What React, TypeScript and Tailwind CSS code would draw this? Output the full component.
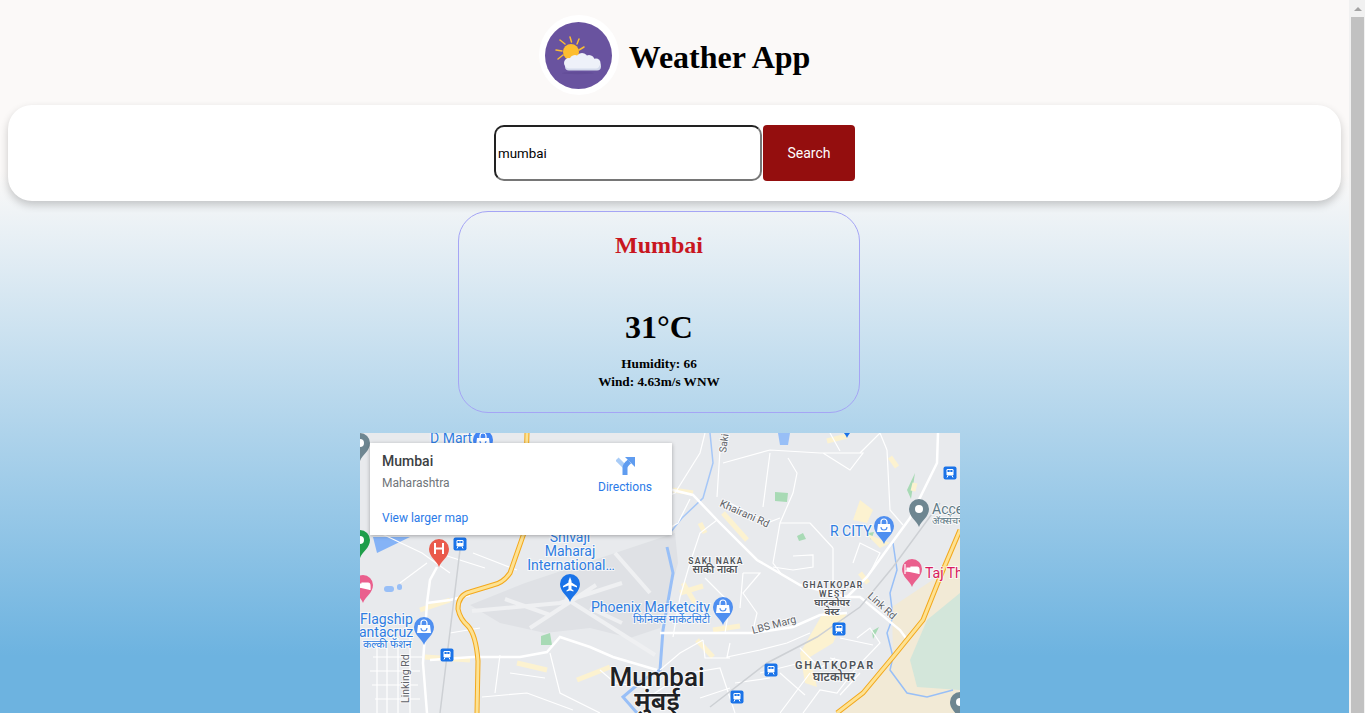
import React from "react";

/* map data, in map pixels */
const motorways = [
  "M167 0 L164 100 L150 140 Q143 150 133 152 L110 159 Q98 162 98 176 Q100 186 108 193 Q116 202 118 228 L117 280",
  "M600 97 L583 137 L563 187 L533 224 L503 260 L477 280",
];

const mainRoads = [
  "M300 54 L333 62 L357 87 L397 127 L440 152 L487 164 L507 144 L550 85 L577 30 L578 0",
  "M487 164 L500 164 L540 197 L548 208",
  "M300 200 L340 200 L393 200 L433 194 L460 182 L487 180",
  "M70 227 L113 224 L160 224 L187 219 L200 204 L230 214 L253 224 L297 237",
  "M67 280 L63 230 L67 170 L70 147 L77 134",
  "M67 170 L90 167 L110 162",
];

const minorRoads = [
  "M360 17 L357 64 M363 30 L410 17 L460 20 L503 20 L490 37 L463 20",
  "M410 20 L403 74 M370 70 L407 90 L420 85 M428 25 L437 40 L433 60 L420 90 L413 130 L423 143",
  "M527 17 L530 77 L543 92 M520 0 L527 17 M470 0 L480 18 M500 20 L520 0",
  "M357 87 L340 100 L330 130 L320 164 L313 204",
  "M433 123 L453 122 L453 134 L433 137 L413 134",
  "M473 115 L473 155 M493 130 L500 110 L520 120 L510 140 M450 90 L473 115 M420 90 L450 90",
  "M383 140 L400 140 L383 160 L397 180 L393 197 M383 140 L380 175 M345 145 L370 170 L365 200",
  "M370 210 L367 224 L400 217 L427 210 L450 200 M300 237 L320 220 L343 207 M343 207 L345 225 L370 225",
  "M443 280 L460 257 L477 260 L497 234 L520 210 L510 195 L497 205 M440 215 L460 235 L475 225",
  "M480 205 L513 212 M470 225 L500 232 M445 262 L420 240 M500 240 L480 262",
  "M400 240 L440 230 M420 280 L450 240 M330 240 L360 235 L375 280 M375 250 L410 245 M340 265 L370 255",
  "M20 100 L62 120 L90 140 M113 120 L157 137 M84 122 L125 135",
  "M13 224 H62 M10 238 H60 M12 252 H58 M15 266 H60 M17 210 V280 M27 215 V280 M38 205 V280 M50 200 V280",
  "M122 264 L167 260 L213 277 M140 222 L135 260 M190 220 L200 260 L240 280 M150 240 L185 245",
  "M300 100 L318 90 L330 66 M290 70 L315 60 L340 20 L345 0",
  "M240 237 L255 250 L290 255 M280 270 L310 250",
  "M67 130 L40 150 M90 200 L120 195",
];

const yellowAreas = [
  "M65 224 L110 227",
  "M60 177 L90 167",
  "M157 230 L187 237",
  "M217 247 L250 234",
  "M363 80 L387 107",
  "M353 197 L380 193",
  "M337 207 L353 224",
  "M313 57 L333 60",
  "M340 90 L345 100",
  "M323 150 L335 170",
  "M320 160 L343 153",
  "M467 8 L487 3",
  "M530 24 L537 34",
  "M555 50 L553 58",
  "M500 140 L508 150",
];

type Label = {
  x: number;
  y: number;
  text: string;
  fill: string;
  size: number;
  weight?: number;
  spacing?: number;
  rotate?: number;
  anchor?: "start" | "middle" | "end";
};

const BLUE = "#2f7de1";
const DARK = "#4f5358";
const ROAD = "#5f6368";

const labels: Label[] = [
  { x: 70, y: 10, text: "D Mart", fill: BLUE, size: 14 },
  { x: 210, y: 109, text: "Shivaji", fill: BLUE, size: 14, anchor: "middle" },
  { x: 210, y: 123, text: "Maharaj", fill: BLUE, size: 14, anchor: "middle" },
  { x: 211, y: 137, text: "International…", fill: BLUE, size: 14, anchor: "middle" },
  { x: 231, y: 179, text: "Phoenix Marketcity", fill: BLUE, size: 14 },
  { x: 273, y: 190, text: "फिनिक्स मार्केटसिटी", fill: BLUE, size: 10.8 },
  { x: 0, y: 191, text: "Flagship", fill: BLUE, size: 14 },
  { x: -1, y: 204, text: "antacruz", fill: BLUE, size: 14 },
  { x: 3, y: 215, text: "कल्की फॅशन", fill: BLUE, size: 10.8 },
  { x: 470, y: 103, text: "R CITY", fill: BLUE, size: 14 },
  { x: 572, y: 81, text: "Acce", fill: "#5f7a86", size: 14 },
  { x: 572, y: 91, text: "अ‍ॅक्सेंचर", fill: "#5f7a86", size: 10 },
  { x: 565, y: 145, text: "Taj Th", fill: "#d81b60", size: 14 },
  { x: 356, y: 131, text: "SAKI NAKA", fill: DARK, size: 8.5, weight: 600, spacing: 1.3, anchor: "middle" },
  { x: 355, y: 140, text: "साकी नाका", fill: DARK, size: 10.5, weight: 600, anchor: "middle" },
  { x: 473, y: 155, text: "GHATKOPAR", fill: DARK, size: 8.5, weight: 600, spacing: 1.3, anchor: "middle" },
  { x: 473, y: 164, text: "WEST", fill: DARK, size: 8.5, weight: 600, spacing: 1.3, anchor: "middle" },
  { x: 472, y: 173, text: "घाटकोपर", fill: DARK, size: 10, weight: 600, anchor: "middle" },
  { x: 472, y: 182, text: "वेस्ट", fill: DARK, size: 10, weight: 600, anchor: "middle" },
  { x: 475, y: 236, text: "GHATKOPAR", fill: DARK, size: 11, weight: 600, spacing: 1.8, anchor: "middle" },
  { x: 474, y: 248, text: "घाटकोपर", fill: DARK, size: 12, weight: 600, anchor: "middle" },
  { x: 297, y: 253, text: "Mumbai", fill: "#202124", size: 26, weight: 500, anchor: "middle" },
  { x: 297, y: 277, text: "मुंबई", fill: "#202124", size: 26, weight: 600, anchor: "middle" },
  { x: 393, y: 201, text: "LBS Marg", fill: ROAD, size: 10.5, rotate: -15 },
  { x: 359, y: 73, text: "Khairani Rd", fill: ROAD, size: 10.5, rotate: 24 },
  { x: 507, y: 164, text: "Link Rd", fill: ROAD, size: 10.5, rotate: 42 },
  { x: 49, y: 270, text: "Linking Rd", fill: ROAD, size: 10.5, rotate: -90 },
  { x: 366, y: 20, text: "Saki", fill: ROAD, size: 10, rotate: -82 },
];

const transit = [
  [100, 111],
  [87, 222],
  [590, 40],
  [479, 196],
  [411, 237],
  [377, 264],
];

const Pin = ({ x, y, color, kind }: { x: number; y: number; color: string; kind: "bag" | "bed" | "dot" | "plane" | "h" }) => (
  <g transform={`translate(${x} ${y})`}>
    <path d="M0 14 C-2 8 -10 4 -10 -4 A10 10 0 1 1 10 -4 C10 4 2 8 0 14 Z" fill={color} />
    {kind === "dot" && <circle cx="0" cy="-4" r="4" fill="#fff" />}
    {kind === "h" && <path d="M-4 -10 V1 M4 -10 V1 M-4 -4.5 H4" stroke="#fff" strokeWidth="2" fill="none" />}
    {kind === "bag" && (
      <g>
        <path d="M-6 -6 H6 L7 2 H-7 Z" fill="#fff" />
        <path d="M-3 -6 V-8 A3 3 0 0 1 3 -8 V-6" stroke="#fff" strokeWidth="1.2" fill="none" />
        <path d="M-3 -3 A3 3 0 0 0 3 -3" stroke={color} strokeWidth="1.1" fill="none" />
      </g>
    )}
    {kind === "bed" && <path d="M-7 -9 V1 M-7 -2 H7 V1 M-5 -5 H-2 V-3 H-5 Z M-1 -6 H5 Q7 -6 7 -3 H-1 Z" stroke="#fff" strokeWidth="1.2" fill="#fff" />}
    {kind === "plane" && <path d="M0 -11 L1.5 -7 V-5.5 L7 -2 V-.5 L1.5 -2.5 V1 L3.5 2.5 V3.5 L0 2.5 L-3.5 3.5 V2.5 L-1.5 1 V-2.5 L-7 -.5 V-2 L-1.5 -5.5 V-7 Z" fill="#fff" />}
  </g>
);

const MapArt = () => (
  <svg width="600" height="280" viewBox="0 0 600 280" className="block" fontFamily="Roboto, 'Noto Sans', sans-serif">
    <rect width="600" height="280" fill="#e8eaed" />

    {/* land, airport and water */}
    <path d="M532 174 L583 140 L600 97 V280 H480 L533 224 Z" fill="#f2ead6" />
    <path d="M550 227 L567 187 L600 160 V257 L557 254 Z" fill="#d3e6da" />
    <path d="M110 172 L165 150 L255 120 L315 100 L318 130 L300 195 L270 205 L230 195 L185 200 L140 190 Z" fill="#dfe1e5" />
    <path d="M112 178 L200 170 L262 150 M170 195 L236 152 M205 165 L295 222 M145 166 L190 182 M230 175 L262 190 M255 120 L290 160" fill="none" stroke="#eff0f2" strokeWidth="4" />
    <path d="M13 104 L50 104 L17 120 Z" fill="#85b3f6" />
    <path d="M307 114 L313 140 L303 197 L300 237 L283 247 L263 264 L277 280" fill="none" stroke="#98bff7" strokeWidth="3" />
    <path d="M350 0 L353 30 L343 65 L322 85 L310 100" fill="none" stroke="#a6c7f7" strokeWidth="1.5" />
    <path d="M533 110 L537 137 L530 160 L533 184 L527 200 L533 224 L530 237 L547 260 L567 264 L593 257" fill="none" stroke="#98bff7" strokeWidth="1.5" />
    <path d="M418 0 H430 L428 12 H420 Z" fill="#98bff7" />
    <rect x="24" y="153" width="10" height="6" rx="3" fill="#98bff7" />
    <rect x="37" y="151" width="5" height="6" rx="2.5" fill="#98bff7" />
    <path d="M181 203 L190 200 L192 212 L181 212 Z M415 59 L428 60 L427 69 L415 68 Z M508 100 L514 99 L511 107 Z M547 57 L555 40 L551 66 Z M437 103 L443 100 L446 106 L439 108 Z M512 198 L519 194 L513 206 Z" fill="#a8dab5" />

    {/* built up areas */}
    <path d="M500 67 L513 77 L507 90 L493 87 Z M463 180 L487 180 L473 210 L450 224 L457 254 L445 250 L440 220 Z M505 100 L530 110 L520 115 Z" fill="#fcf2d0" />
    {yellowAreas.map((d) => (
      <path key={d} d={d} fill="none" stroke="#fcf2d0" strokeWidth="5" />
    ))}

    {minorRoads.map((d) => (
      <path key={d} d={d} fill="none" stroke="#fff" strokeWidth="1.2" />
    ))}
    {mainRoads.map((d) => (
      <path key={d} d={d} fill="none" stroke="#fff" strokeWidth="2.5" />
    ))}

    {/* rail */}
    <path d="M580 70 L533 134 L500 174 L457 204 L407 230 L350 274 M100 117 L80 280" fill="none" stroke="#cdd0d4" strokeWidth="1.5" />

    {motorways.map((d) => (
      <g key={d}>
        <path d={d} fill="none" stroke="#f3a81c" strokeWidth="5" />
        <path d={d} fill="none" stroke="#fde293" strokeWidth="3" />
      </g>
    ))}

    {labels.map((l) => (
      <text
        key={l.text + l.x}
        x={l.x}
        y={l.y}
        fill={l.fill}
        fontSize={l.size}
        fontWeight={l.weight ?? 400}
        letterSpacing={l.spacing}
        textAnchor={l.anchor ?? "start"}
        transform={l.rotate ? `rotate(${l.rotate} ${l.x} ${l.y})` : undefined}
        stroke="#fff"
        strokeWidth="2"
        paintOrder="stroke"
        strokeOpacity="0.7"
      >
        {l.text}
      </text>
    ))}

    {transit.map(([x, y]) => (
      <g key={`${x}-${y}`} transform={`translate(${x - 6.5} ${y - 6.5})`}>
        <rect width="13" height="13" rx="2" fill="#1a73e8" />
        <rect x="3" y="2.5" width="7" height="6.5" rx="1.2" fill="#fff" />
        <rect x="4" y="3.5" width="2.2" height="2" fill="#1a73e8" />
        <rect x="6.8" y="3.5" width="2.2" height="2" fill="#1a73e8" />
        <path d="M4.5 9 L3.5 11 M8.5 9 L9.5 11" stroke="#fff" strokeWidth="1" />
      </g>
    ))}

    <Pin x={123} y={11} color="#4285f4" kind="bag" />
    <Pin x={0} y={14} color="#6e8691" kind="dot" />
    <Pin x={0} y={111} color="#1e9e4a" kind="dot" />
    <Pin x={79} y={120} color="#ea5a4c" kind="h" />
    <Pin x={3} y={156} color="#ea5f8d" kind="bed" />
    <Pin x={210} y={155} color="#1a73e8" kind="plane" />
    <Pin x={64} y={198} color="#4f8ff0" kind="bag" />
    <Pin x={363} y={178} color="#4f8ff0" kind="bag" />
    <Pin x={524} y={97} color="#4f8ff0" kind="bag" />
    <Pin x={559} y={80} color="#6e8691" kind="dot" />
    <Pin x={552} y={140} color="#ea5f8d" kind="bed" />
    <Pin x={600} y={273} color="#6e8691" kind="dot" />
    <Pin x={487} y={-9} color="#1a73e8" kind="dot" />
  </svg>
);

const WeatherLogo = () => (
  <svg width="67" height="67" viewBox="0 0 67 67">
    <circle cx="33.5" cy="33.5" r="33.5" fill="#69539f" />
    <g stroke="#fbbc33" strokeWidth="1.5" strokeLinecap="round">
      <path d="M11 28 L17 29" />
      <path d="M15 18 L20 22" />
      <path d="M25 15 L26.5 20" />
      <path d="M34 17 L32 22" />
      <path d="M39 25 L34 28" />
      <path d="M13 37 L18 33" />
    </g>
    <circle cx="26" cy="30" r="8" fill="#fdbd2f" />
    <g fill="#d5dbec">
      <rect x="20" y="40" width="36" height="8.5" rx="4" />
    </g>
    <g fill="#eef1f9">
      <circle cx="24" cy="41" r="5" />
      <circle cx="30" cy="38.5" r="5.5" />
      <circle cx="37" cy="37" r="6" />
      <circle cx="44" cy="38.5" r="5.5" />
      <circle cx="51" cy="41" r="4.5" />
      <rect x="21" y="40" width="33" height="6.5" rx="3" />
    </g>
    <ellipse cx="33" cy="51" rx="16" ry="1.2" fill="#634d98" />
  </svg>
);

const Scrollbar = () => (
  <div className="w-[16px] h-full bg-[#f1f1f1] flex flex-col items-center shrink-0 pl-[1px]">
    <div className="h-[17px] flex items-center justify-center">
      <div className="w-0 h-0 border-l-[4px] border-r-[4px] border-b-[4px] border-l-transparent border-r-transparent border-b-[#a3a3a3]" />
    </div>
    <div className="w-[13px] flex-1 bg-[#c1c1c1]" />
  </div>
);

export default function App() {
  return (
    <div className="flex h-[713px] overflow-hidden">
      <main className="flex-1 min-w-0 bg-[linear-gradient(#fbf9f8_24%,#6db3e0_92%)] font-['Liberation_Serif',serif]">
        <header className="h-[105px] pt-[15px] flex justify-center">
          <div className="flex items-center gap-[10px] h-[80px]">
            <div className="w-[80px] h-[80px] rounded-full bg-white flex items-center justify-center">
              <WeatherLogo />
            </div>
            <h1 className="text-[32px] font-bold text-black leading-none pt-[4px]">Weather App</h1>
          </div>
        </header>

        <div className="mx-2 h-[96px] rounded-[24px] bg-white shadow-[0_4px_8px_rgba(0,0,0,0.2)] flex items-center justify-center gap-[1px]">
          <input
            readOnly
            value="mumbai"
            className="w-[268px] h-[56px] rounded-[10px] border-2 border-t-[#222] border-l-[#222] border-r-[#767676] border-b-[#767676] px-[2px] text-[13.33px] text-black font-['Roboto',sans-serif] outline-none"
          />
          <button className="w-[92px] h-[56px] rounded-[4px] bg-[#940e0e] text-white text-[14px] font-['Roboto',sans-serif]">
            Search
          </button>
        </div>

        <section className="mt-[10px] ml-[458px] w-[402px] h-[202px] rounded-[30px] border border-[#a5a5f5] flex flex-col items-center text-black">
          <h2 className="mt-[19px] text-[24px] leading-[28px] font-bold text-[#c8161f]">Mumbai</h2>
          <div className="mt-[50px] text-[32px] leading-[37px] font-bold">31°C</div>
          <p className="mt-[9px] text-[13.28px] leading-[18px] font-bold">Humidity: 66</p>
          <p className="text-[13.28px] leading-[18px] font-bold">Wind: 4.63m/s WNW</p>
        </section>

        <div className="relative mt-[20px] ml-[360px] w-[600px] h-[280px] overflow-hidden">
          <MapArt />
          <div className="absolute left-[10px] top-[10px] w-[302px] h-[92px] bg-white shadow-[0_1px_4px_rgba(0,0,0,0.3)] px-[12px] pt-[10px] font-['Roboto',sans-serif] flex justify-between">
            <div className="flex flex-col">
              <span className="text-[14px] leading-[16px] font-medium text-[#3c4043]">Mumbai</span>
              <span className="mt-[6px] text-[12px] leading-[16px] text-[#70757a]">Maharashtra</span>
              <span className="mt-[20px] text-[12px] leading-[14px] text-[#2a7ae8]">View larger map</span>
            </div>
            <div className="flex flex-col items-center w-[70px] pt-[4px]">
              <svg width="19" height="18" viewBox="0 0 19 18">
                <path d="M1 2 L9 10" stroke="#a9ccf7" strokeWidth="4.5" fill="none" />
                <path d="M9 18 V11 Q9 8 13.5 4.5" stroke="#5f9cf0" strokeWidth="5" fill="none" />
                <path d="M9 0 H19 V10 Z" fill="#5f9cf0" />
              </svg>
              <span className="mt-[5px] text-[12px] leading-[14px] text-[#2a7ae8]">Directions</span>
            </div>
          </div>
        </div>
      </main>
      <Scrollbar />
    </div>
  );
}
